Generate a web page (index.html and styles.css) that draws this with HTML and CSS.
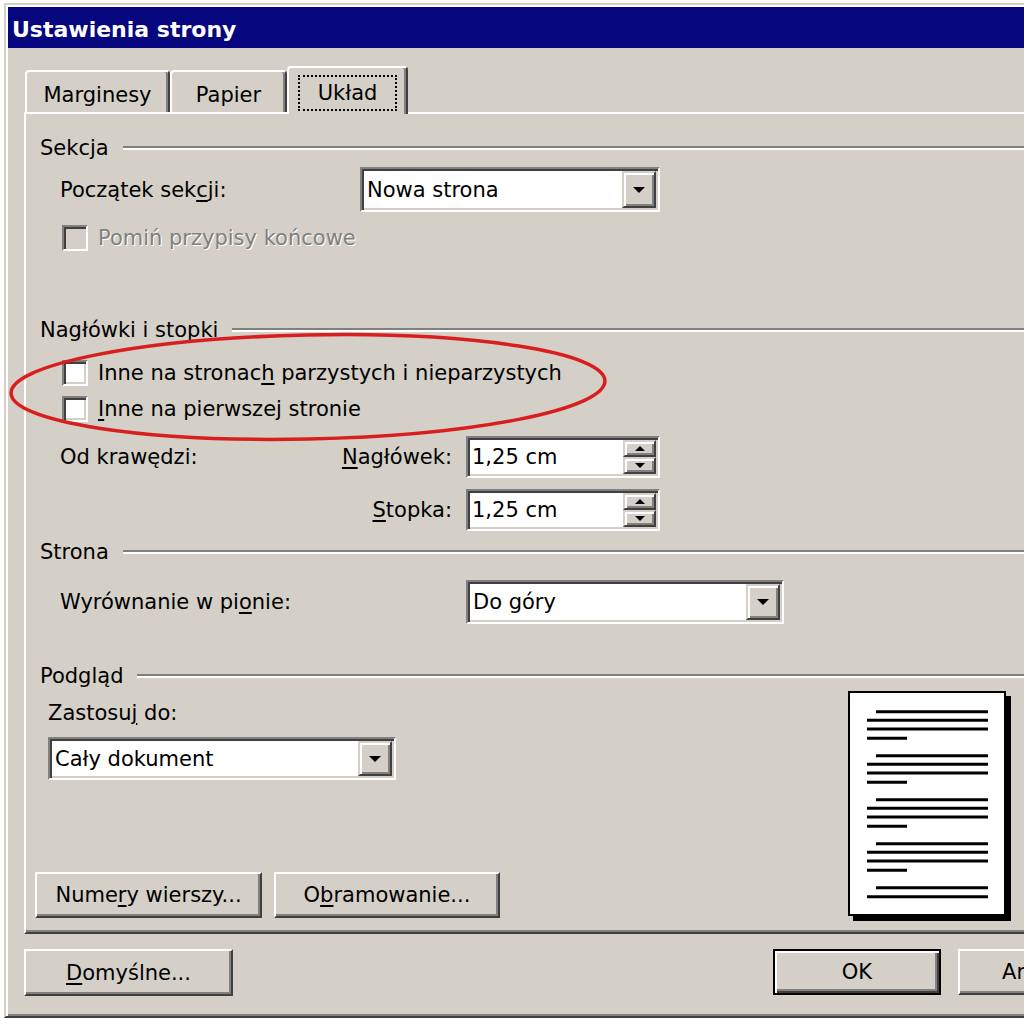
FILE: index.html
```html
<!DOCTYPE html>
<html lang="pl">
<head>
<meta charset="utf-8">
<title>Ustawienia strony</title>
<link rel="stylesheet" href="styles.css">
</head>
<body>
<div class="window">
  <div class="titlebar">Ustawienia strony</div>
  <div class="client">
    <div class="tabs">
      <div class="tab tab-margins">Marginesy</div>
      <div class="tab tab-paper">Papier</div>
      <div class="tab tab-layout"><span class="focus">Układ</span></div>
    </div>
    <div class="panel">
      <div class="group-title"><span>Sekcja</span><i class="etch"></i></div>
      <div class="row row-start">
        <span class="lbl w300">Początek sek<u>c</u>ji:</span>
        <div class="combo combo-start"><span class="combo-text">Nowa strona</span><span class="drop"><i class="arrow-down"></i></span></div>
      </div>
      <div class="check disabled mt13"><span class="box"></span><span>Pomiń przypisy końcowe</span></div>

      <div class="group-title mt65"><span>Nagłówki i stopki</span><i class="etch"></i></div>
      <div class="check mt16"><span class="box"></span><span>Inne na stronac<u>h</u> parzystych i nieparzystych</span></div>
      <div class="check mt10"><span class="box"></span><span><u>I</u>nne na pierwszej stronie</span></div>
      <div class="spin-row mt14">
        <span>Od krawędzi:</span>
        <span class="lbl-right"><u>N</u>agłówek:</span>
        <div class="spin"><span class="spin-text">1,25 cm</span><span class="spin-btns"><span class="spin-btn"><i class="arrow-up"></i></span><span class="spin-btn"><i class="arrow-dn"></i></span></span></div>
      </div>
      <div class="spin-row mt11">
        <span></span>
        <span class="lbl-right"><u>S</u>topka:</span>
        <div class="spin"><span class="spin-text">1,25 cm</span><span class="spin-btns"><span class="spin-btn"><i class="arrow-up"></i></span><span class="spin-btn"><i class="arrow-dn"></i></span></span></div>
      </div>

      <div class="group-title mt7"><span>Strona</span><i class="etch"></i></div>
      <div class="row row-align mt14">
        <span class="lbl w406">Wyrównanie w pi<u>o</u>nie:</span>
        <div class="combo combo-align"><span class="combo-text">Do góry</span><span class="drop"><i class="arrow-down"></i></span></div>
      </div>

      <div class="group-title mt38"><span>Podgląd</span><i class="etch"></i></div>
      <div class="preview-section">
        <div class="preview-left">
          <div class="apply-label">Zastosu<u>j</u> do:</div>
          <div class="combo combo-apply"><span class="combo-text">Cały dokument</span><span class="drop"><i class="arrow-down"></i></span></div>
          <div class="panel-buttons">
            <div class="btn btn-lines">Nume<u>r</u>y wierszy...</div>
            <div class="btn btn-borders">O<u>b</u>ramowanie...</div>
          </div>
        </div>
        <div class="page">
          <svg width="154" height="221" viewBox="0 0 154 221">
            <g stroke="#000" stroke-width="3">
              <line x1="26" y1="18.7" x2="138" y2="18.7"/>
              <line x1="17" y1="27.3" x2="138" y2="27.3"/>
              <line x1="17" y1="36" x2="138" y2="36"/>
              <line x1="17" y1="45.3" x2="57" y2="45.3"/>
              <line x1="26" y1="62.7" x2="138" y2="62.7"/>
              <line x1="17" y1="71.3" x2="138" y2="71.3"/>
              <line x1="17" y1="80" x2="138" y2="80"/>
              <line x1="17" y1="89.3" x2="57" y2="89.3"/>
              <line x1="26" y1="106.7" x2="138" y2="106.7"/>
              <line x1="17" y1="115.3" x2="138" y2="115.3"/>
              <line x1="17" y1="124" x2="138" y2="124"/>
              <line x1="17" y1="133.3" x2="57" y2="133.3"/>
              <line x1="26" y1="150.7" x2="138" y2="150.7"/>
              <line x1="17" y1="159.3" x2="138" y2="159.3"/>
              <line x1="17" y1="168" x2="138" y2="168"/>
              <line x1="17" y1="177.3" x2="57" y2="177.3"/>
              <line x1="26" y1="194.7" x2="138" y2="194.7"/>
              <line x1="17" y1="203.7" x2="138" y2="203.7"/>
            </g>
          </svg>
        </div>
      </div>
    </div>
    <div class="dialog-buttons">
      <div class="btn btn-default-settings"><span><u>D</u>omyślne...</span></div>
      <div class="btn btn-ok">OK</div>
      <div class="btn btn-cancel">Anuluj</div>
    </div>
  </div>
</div>
<svg class="annotation" width="1024" height="1024" viewBox="0 0 1024 1024">
  <ellipse cx="308" cy="387" rx="297" ry="52" transform="rotate(-1.2 308 387)" fill="none" stroke="#d81e1e" stroke-width="3.5"/>
</svg>
</body>
</html>
```

FILE: styles.css
```css
html, body {
  margin: 0;
  padding: 0;
  width: 1024px;
  height: 1024px;
  overflow: hidden;
  background: #ffffff;
}

body {
  font-family: "DejaVu Sans", "Noto Sans", sans-serif;
  font-size: 21px;
  line-height: 26px;
  color: #000;
}

u {
  text-decoration-thickness: 2px;
  text-underline-offset: 3px;
}

.window {
  margin: 3px 0 0 4px;
  width: 1110px;
  background: #d4d0c8;
  border: 2px solid;
  border-color: #d4d0c8 #404040 #404040 #d4d0c8;
  box-shadow: inset 2px 2px #ffffff, inset -2px -2px #808080;
  padding: 2px;
}

.titlebar {
  height: 41px;
  box-sizing: border-box;
  padding: 4px 0 0 4px;
  line-height: 37px;
  background: #06067f;
  color: #fff;
  font-weight: bold;
  font-size: 22px;
}

.client {
  padding: 18px 0 18px 16px;
}

/* Tabs */
.tabs {
  display: flex;
  align-items: flex-start;
  height: 46px;
  padding-left: 1px;
}

.tab {
  flex: none;
  box-sizing: border-box;
  height: 42px;
  margin-top: 4px;
  padding-top: 10px;
  text-align: center;
  border: 2px solid;
  border-bottom: none;
  border-color: #ffffff #404040 transparent #ffffff;
  box-shadow: inset -2px 0 #808080;
  border-radius: 4px 4px 0 0;
  background: #d4d0c8;
}

.tab-margins { width: 145px; }
.tab-paper { width: 117px; }

.tab-layout {
  width: 121px;
  height: 48px;
  margin-top: 0;
  margin-bottom: -2px;
  padding-top: 7px;
  position: relative;
  z-index: 1;
}

.focus {
  display: inline-block;
  border: 2px dotted #000;
  padding: 3px 18px;
}

/* Panel */
.panel {
  background: #d4d0c8;
  border-top: 2px solid #ffffff;
  border-left: 2px solid #ffffff;
  border-bottom: 2px solid #404040;
  box-shadow: inset 0 -2px #808080;
  padding: 20px 0 14px 0;
}

.group-title {
  display: flex;
  align-items: center;
  height: 28px;
  margin-left: 14px;
}

.etch {
  flex: 1;
  height: 0;
  border-top: 2px solid #808080;
  border-bottom: 2px solid #ffffff;
  margin-left: 14px;
}

.row {
  display: flex;
  align-items: center;
  margin-left: 34px;
}

.row-start { margin-top: 5px; height: 45px; }
.row-align { height: 44px; }

.lbl { flex: none; }
.w300 { width: 300px; }
.w406 { width: 406px; }

.mt7 { margin-top: 7px; }
.mt10 { margin-top: 10px; }
.mt11 { margin-top: 11px; }
.mt13 { margin-top: 13px; }
.mt14 { margin-top: 14px; }
.mt16 { margin-top: 16px; }
.mt38 { margin-top: 38px; }
.mt65 { margin-top: 65px; }

/* Checkbox */
.check {
  display: flex;
  align-items: center;
  gap: 10px;
  height: 26px;
  margin-left: 36px;
}

.box {
  flex: none;
  width: 26px;
  height: 26px;
  box-sizing: border-box;
  background: #fff;
  border: 2px solid;
  border-color: #808080 #ffffff #ffffff #808080;
  box-shadow: inset 2px 2px #404040, inset -2px -2px #d4d0c8;
}

.check.disabled { color: #808080; text-shadow: 1px 1px 0 #ffffff; }
.check.disabled .box { background: #d4d0c8; }

/* Combo */
.combo {
  flex: none;
  box-sizing: border-box;
  display: flex;
  background: #fff;
  border: 2px solid;
  border-color: #808080 #ffffff #ffffff #808080;
  box-shadow: inset 2px 2px #404040, inset -2px -2px #d4d0c8;
  padding: 2px;
}

.combo-start { width: 300px; height: 45px; }
.combo-align { width: 318px; height: 44px; }
.combo-apply { width: 348px; height: 43px; margin-left: 22px; margin-top: 11px; }

.combo-text {
  flex: 1;
  align-self: center;
  padding-left: 3px;
}

.drop, .spin-btn {
  box-sizing: border-box;
  display: flex;
  align-items: center;
  justify-content: center;
  background: #d4d0c8;
  border: 2px solid;
  border-color: #d4d0c8 #404040 #404040 #d4d0c8;
  box-shadow: inset 2px 2px #ffffff, inset -2px -2px #808080;
}

.drop { width: 34px; flex: none; }

.arrow-down {
  width: 0;
  height: 0;
  border-left: 6px solid transparent;
  border-right: 6px solid transparent;
  border-top: 6px solid #000;
}

/* Spinner */
.spin-row {
  display: grid;
  grid-template-columns: 266px 140px 194px;
  align-items: center;
  height: 42px;
  margin-left: 34px;
}

.lbl-right {
  text-align: right;
  padding-right: 14px;
}

.spin {
  box-sizing: border-box;
  display: flex;
  width: 194px;
  height: 42px;
  background: #fff;
  border: 2px solid;
  border-color: #808080 #ffffff #ffffff #808080;
  box-shadow: inset 2px 2px #404040, inset -2px -2px #d4d0c8;
  padding: 2px;
}

.spin-text {
  flex: 1;
  align-self: center;
  padding-left: 2px;
}

.spin-btns {
  width: 33px;
  flex: none;
  display: flex;
  flex-direction: column;
}

.spin-btn { flex: 1; }

.arrow-up {
  width: 0;
  height: 0;
  border-left: 5px solid transparent;
  border-right: 5px solid transparent;
  border-bottom: 5px solid #000;
}

.arrow-dn {
  width: 0;
  height: 0;
  border-left: 5px solid transparent;
  border-right: 5px solid transparent;
  border-top: 5px solid #000;
}

/* Preview */
.preview-section {
  display: grid;
  grid-template-columns: 822px 158px;
}

.apply-label {
  margin: 10px 0 0 22px;
  height: 26px;
}

.panel-buttons {
  display: flex;
  margin: 92px 0 0 9px;
}

.page {
  margin-top: 1px;
  width: 158px;
  height: 225px;
  box-sizing: border-box;
  border: 2px solid #000;
  background: #fff;
  box-shadow: 5px 5px 0 #000;
}

.page svg { display: block; }

/* Buttons */
.btn {
  flex: none;
  box-sizing: border-box;
  height: 46px;
  display: flex;
  align-items: center;
  justify-content: center;
  background: #d4d0c8;
  border: 2px solid;
  border-color: #ffffff #404040 #404040 #ffffff;
  box-shadow: inset -2px -2px #808080;
  white-space: nowrap;
}

.btn-lines { width: 227px; }
.btn-borders { width: 226px; margin-left: 12px; }

.dialog-buttons {
  display: flex;
  margin-top: 15px;
}

.btn-default-settings { width: 209px; height: 47px; }

.btn-ok {
  width: 168px;
  margin-left: 540px;
  border-color: #000;
  box-shadow: inset 2px 2px #ffffff, inset -2px -2px #404040, inset -4px -4px #808080;
}

.btn-cancel {
  width: 168px;
  margin-left: 17px;
  padding-right: 14px;
}

/* Red annotation ellipse drawn over the dialog */
.annotation {
  position: absolute;
  left: 0;
  top: 0;
  pointer-events: none;
}
```
